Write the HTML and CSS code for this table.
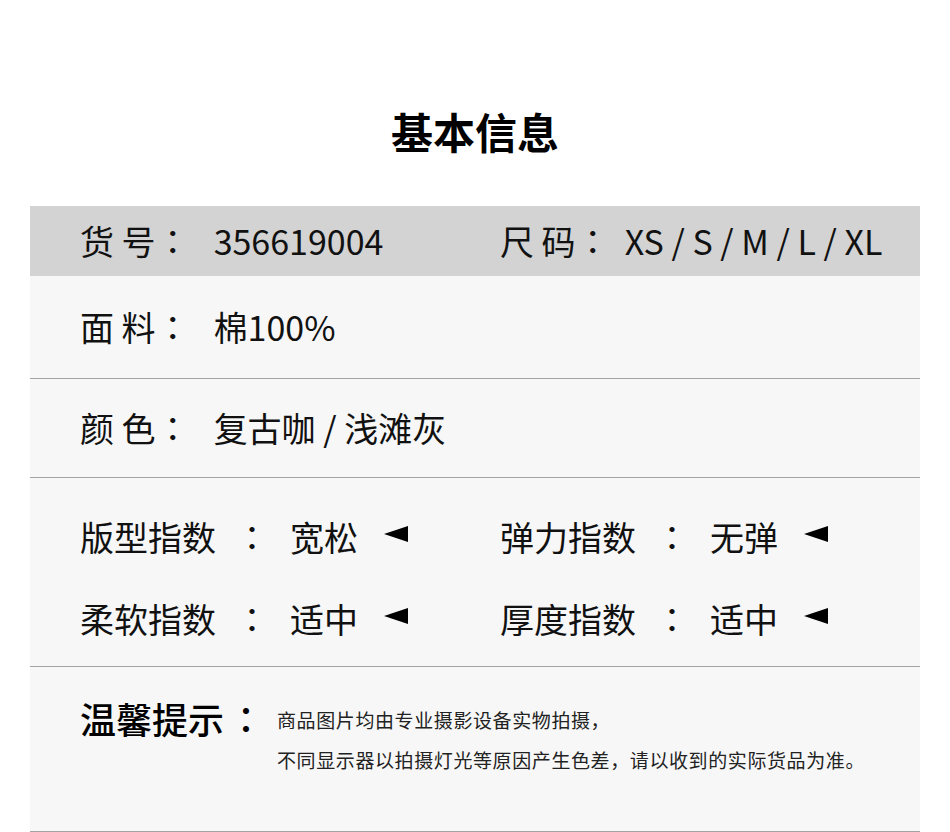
FILE: index.html
```html
<!DOCTYPE html>
<html lang="zh-CN">
<head>
<meta charset="utf-8">
<title>基本信息</title>
<link rel="stylesheet" href="styles.css">
</head>
<body>
<div class="page">
  <h1 class="title">基本信息</h1>
  <div class="table">
    <div class="row row-head">
      <div class="cell"><span class="label">货 号</span><span class="colon">：</span><span class="value v-left">356619004</span></div>
      <div class="cell"><span class="label">尺 码</span><span class="colon">：</span><span class="value v-right">XS / S / M / L / XL</span></div>
    </div>
    <div class="row row-fabric">
      <div class="cell"><span class="label">面 料</span><span class="colon">：</span><span class="value v-left">棉100%</span></div>
    </div>
    <div class="row row-color">
      <div class="cell"><span class="label">颜 色</span><span class="colon">：</span><span class="value v-left">复古咖 / 浅滩灰</span></div>
    </div>
    <div class="row row-index">
      <div class="idx"><span class="idx-label">版型指数</span><span class="colon idx-colon">：</span><span class="idx-value">宽松</span><svg class="arrow" viewBox="0 0 24 16" width="24" height="16"><polygon points="0,8 24,0 24,16"/></svg></div>
      <div class="idx"><span class="idx-label">弹力指数</span><span class="colon idx-colon">：</span><span class="idx-value">无弹</span><svg class="arrow" viewBox="0 0 24 16" width="24" height="16"><polygon points="0,8 24,0 24,16"/></svg></div>
      <div class="idx"><span class="idx-label">柔软指数</span><span class="colon idx-colon">：</span><span class="idx-value">适中</span><svg class="arrow" viewBox="0 0 24 16" width="24" height="16"><polygon points="0,8 24,0 24,16"/></svg></div>
      <div class="idx"><span class="idx-label">厚度指数</span><span class="colon idx-colon">：</span><span class="idx-value">适中</span><svg class="arrow" viewBox="0 0 24 16" width="24" height="16"><polygon points="0,8 24,0 24,16"/></svg></div>
    </div>
    <div class="row row-tip">
      <div class="tip-label"><span>温馨提示</span><span class="colon tip-colon">：</span></div>
      <div class="tip-text">
        <p>商品图片均由专业摄影设备实物拍摄，</p>
        <p>不同显示器以拍摄灯光等原因产生色差，请以收到的实际货品为准。</p>
      </div>
    </div>
  </div>
</div>
</body>
</html>
```
FILE: styles.css
```css
* { box-sizing: border-box; }
html, body {
  margin: 0;
  padding: 0;
  background: #ffffff;
}
body {
  font-family: "Noto Sans CJK SC", "Noto Sans", sans-serif;
  color: #111111;
}
.page {
  width: 950px;
}
.title {
  margin: 0;
  padding: 100px 0 44px;
  height: 206px;
  line-height: 62px;
  font-size: 42px;
  font-weight: 700;
  text-align: center;
  color: #000;
}
.table {
  margin: 0 30px;
  width: 890px;
}
.row {
  background: #f7f7f7;
  border-bottom: 1px solid #a3a3a3;
  padding-left: 50px;
  font-size: 34px;
  line-height: 34px;
}
.colon {
  font-family: "Noto Sans CJK TC", "Noto Sans CJK SC", sans-serif;
  display: inline-block;
  width: 1em;
  text-align: center;
}
.row-head {
  background: #d3d3d3;
  border-bottom: none;
  height: 70px;
  padding-top: 18px;
  display: grid;
  grid-template-columns: 420px auto;
}
.row-fabric {
  height: 103px;
  padding-top: 34px;
}
.row-color {
  height: 99px;
  padding-top: 32px;
}
.cell {
  display: flex;
  white-space: pre;
}
.v-left { margin-left: 24px; }
.v-right { margin-left: 15px; }

.row-index {
  height: 189px;
  padding-top: 18px;
  display: grid;
  grid-template-columns: 420px auto;
  grid-auto-rows: 82px;
  line-height: 82px;
}
.idx {
  display: flex;
  align-items: center;
}
.idx-colon {
  margin-left: 19px;
}
.idx-value {
  margin-left: 21px;
}
.arrow {
  margin-left: 26px;
  margin-top: -6px;
  fill: #000;
}

.row-tip {
  height: 165px;
  padding-top: 33px;
  display: flex;
  align-items: flex-start;
}
.tip-label {
  font-size: 36px;
  line-height: 36px;
  font-weight: 500;
  color: #000;
  display: flex;
}
.tip-colon {
  margin-left: 4px;
}
.tip-text {
  margin-left: 13px;
  font-size: 19px;
  letter-spacing: 0.6px;
  line-height: 40px;
  color: #222;
}
.tip-text p {
  margin: 0;
}
```
